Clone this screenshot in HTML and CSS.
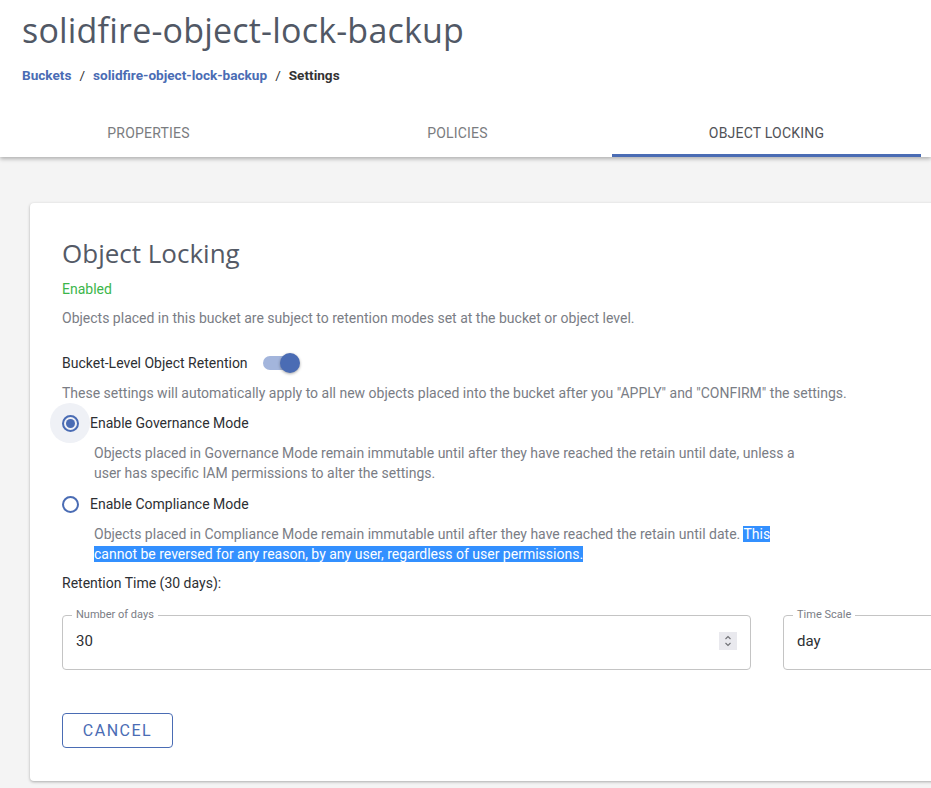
FILE: index.html
```html
<!DOCTYPE html>
<html lang="en">
<head>
<meta charset="utf-8">
<title>solidfire-object-lock-backup - Settings</title>
<link rel="stylesheet" href="styles.css">
</head>
<body>
<header class="page-header">
  <h1 class="page-title">solidfire-object-lock-backup</h1>
  <nav class="breadcrumb">
    <a class="crumb-link" href="#">Buckets</a>
    <span class="crumb-sep">/</span>
    <a class="crumb-link" href="#">solidfire-object-lock-backup</a>
    <span class="crumb-sep">/</span>
    <span class="crumb-current">Settings</span>
  </nav>
  <div class="tabs">
    <div class="tab">Properties</div>
    <div class="tab">Policies</div>
    <div class="tab tab-active">Object Locking</div>
  </div>
</header>
<main class="content">
  <section class="card">
    <h2 class="card-title">Object Locking</h2>
    <p class="status">Enabled</p>
    <p class="muted intro">Objects placed in this bucket are subject to retention modes set at the bucket or object level.</p>
    <div class="retention-row">
      <span class="dark">Bucket-Level Object Retention</span>
      <span class="toggle"><span class="toggle-track"></span><span class="toggle-knob"></span></span>
    </div>
    <p class="muted apply-note">These settings will automatically apply to all new objects placed into the bucket after you "APPLY" and "CONFIRM" the settings.</p>
    <div class="radio-row">
      <span class="radio-hit radio-hit-focus"><span class="radio radio-checked"></span></span>
      <span class="dark">Enable Governance Mode</span>
    </div>
    <p class="muted radio-desc">Objects placed in Governance Mode remain immutable until after they have reached the retain until date, unless a user has specific IAM permissions to alter the settings.</p>
    <div class="radio-row radio-row-second">
      <span class="radio-hit"><span class="radio"></span></span>
      <span class="dark">Enable Compliance Mode</span>
    </div>
    <p class="muted radio-desc">Objects placed in Compliance Mode remain immutable until after they have reached the retain until date. <span class="selected">This cannot be reversed for any reason, by any user, regardless of user permissions.</span></p>
    <p class="dark retention-label">Retention Time (30 days):</p>
    <div class="fields">
      <fieldset class="field field-days">
        <legend class="field-label">Number of days</legend>
        <div class="field-body">
          <span class="field-value">30</span>
          <span class="spinner">
            <svg width="18" height="18" viewBox="0 0 18 18" fill="none" stroke="#6f7075" stroke-width="1.1">
              <path d="M6.5 7 L9 4.5 L11.5 7"/>
              <path d="M6.5 11 L9 13.5 L11.5 11"/>
            </svg>
          </span>
        </div>
      </fieldset>
      <fieldset class="field field-scale">
        <legend class="field-label">Time Scale</legend>
        <div class="field-body">
          <span class="field-value">day</span>
        </div>
      </fieldset>
    </div>
    <div class="actions">
      <button class="btn-outline" type="button">Cancel</button>
    </div>
  </section>
</main>
</body>
</html>
```

FILE: styles.css
```css
html, body {
  margin: 0;
  padding: 0;
  overflow: hidden;
  height: 788px;
}
body {
  background: #f4f4f4;
  font-family: Roboto, "Liberation Sans", sans-serif;
  font-size: 14px;
  color: #333;
}
p { margin: 0; }

.page-header {
  background: #fff;
  box-shadow: 0 2px 4px rgba(0, 0, 0, 0.28);
  position: relative;
  z-index: 1;
}
.page-title {
  margin: 0;
  padding: 9px 0 0 22px;
  font-family: "Open Sans", "DejaVu Sans", sans-serif;
  font-weight: 400;
  font-size: 34px;
  line-height: 42px;
  color: #515865;
  letter-spacing: 0.2px;
}
.breadcrumb {
  padding: 15px 0 0 22px;
  font-size: 13.6px;
  line-height: 18px;
  font-weight: 700;
  display: flex;
  gap: 8px;
}
.crumb-link {
  color: #4a6cb4;
  text-decoration: none;
}
.crumb-sep {
  color: #333;
  font-weight: 400;
}
.crumb-current { color: #333; }

.tabs {
  display: flex;
  margin: 16px 0 0 -6px;
  height: 57px;
}
.tab {
  width: 309px;
  flex: none;
  display: flex;
  align-items: center;
  justify-content: center;
  padding-top: 12px;
  box-sizing: border-box;
  text-transform: uppercase;
  font-size: 14px;
  letter-spacing: 0.2px;
  color: #7a7c80;
  border-bottom: 3px solid transparent;
}
.tab-active {
  color: #505257;
  border-bottom-color: #4a6cb4;
}

.content {
  padding: 46px 0 0 30px;
}
.card {
  width: 1000px;
  background: #fff;
  border-radius: 4px;
  box-shadow: 0 1px 3px rgba(0, 0, 0, 0.3);
  padding: 34px 32px 33px 32px;
  box-sizing: border-box;
}
.card-title {
  margin: 0;
  font-family: "Open Sans", "DejaVu Sans", sans-serif;
  font-weight: 400;
  font-size: 26px;
  line-height: 32px;
  color: #545a66;
}
.status {
  margin-top: 10px;
  color: #3cb64a;
  line-height: 20px;
}
.muted {
  color: #7a7d85;
  line-height: 20px;
}
.dark { color: #2d2f33; }
.intro { margin-top: 9px; }

.retention-row {
  margin-top: 23px;
  height: 24px;
  display: flex;
  align-items: center;
  gap: 15px;
}
.toggle {
  position: relative;
  width: 38px;
  height: 24px;
  display: inline-block;
}
.toggle-track {
  position: absolute;
  left: 0;
  top: 5px;
  width: 34px;
  height: 14px;
  border-radius: 7px;
  background: #a3b5dc;
}
.toggle-knob {
  position: absolute;
  left: 17px;
  top: 2px;
  width: 20px;
  height: 20px;
  border-radius: 50%;
  background: #4a6cb4;
  box-shadow: 0 1px 3px rgba(0, 0, 0, 0.35);
}
.apply-note { margin-top: 8px; }

.radio-row {
  display: flex;
  align-items: center;
  height: 40px;
  margin-left: -12px;
}
.radio-row-second { margin-top: 1px; }
.radio-hit {
  width: 40px;
  height: 40px;
  display: flex;
  align-items: center;
  justify-content: center;
  border-radius: 50%;
}
.radio-hit-focus { background: #eff1f6; }
.radio {
  width: 17px;
  height: 17px;
  box-sizing: border-box;
  border: 2px solid #4a6cb4;
  border-radius: 50%;
  display: flex;
  align-items: center;
  justify-content: center;
}
.radio-checked::after {
  content: "";
  width: 9px;
  height: 9px;
  border-radius: 50%;
  background: #4a6cb4;
}
.radio-desc {
  padding-left: 32px;
  width: 712px;
}
.selected {
  background: #3390ff;
  color: #fff;
}
.retention-label {
  margin-top: 9px;
  line-height: 20px;
}

.fields {
  display: flex;
  gap: 32px;
  margin-top: 16px;
}
.field {
  flex: none;
  margin: 0;
  border: 1px solid #c4c4c4;
  border-radius: 4px;
  padding: 0 13px 0 13px;
  height: 61px;
  box-sizing: border-box;
  min-width: 0;
}
.field-days { width: 689px; }
.field-scale { width: 300px; }
.field-label {
  font-size: 11px;
  line-height: 12px;
  color: #7a7d85;
  padding: 0 4px;
  margin-left: -4px;
}
.field-body {
  display: flex;
  align-items: center;
  justify-content: space-between;
  height: 24px;
  margin-top: 8px;
}
.field-value {
  font-size: 15px;
  color: #2d2f33;
}
.spinner {
  width: 18px;
  height: 18px;
  background: #e9e9ee;
  display: flex;
}

.actions { margin-top: 43px; }
.btn-outline {
  background: #fff;
  border: 1px solid #4a6cb4;
  border-radius: 4px;
  color: #4a6cb4;
  font-family: Roboto, "Liberation Sans", sans-serif;
  font-size: 16px;
  letter-spacing: 1.5px;
  text-transform: uppercase;
  width: 111px;
  height: 35px;
  padding: 0;
}
```
